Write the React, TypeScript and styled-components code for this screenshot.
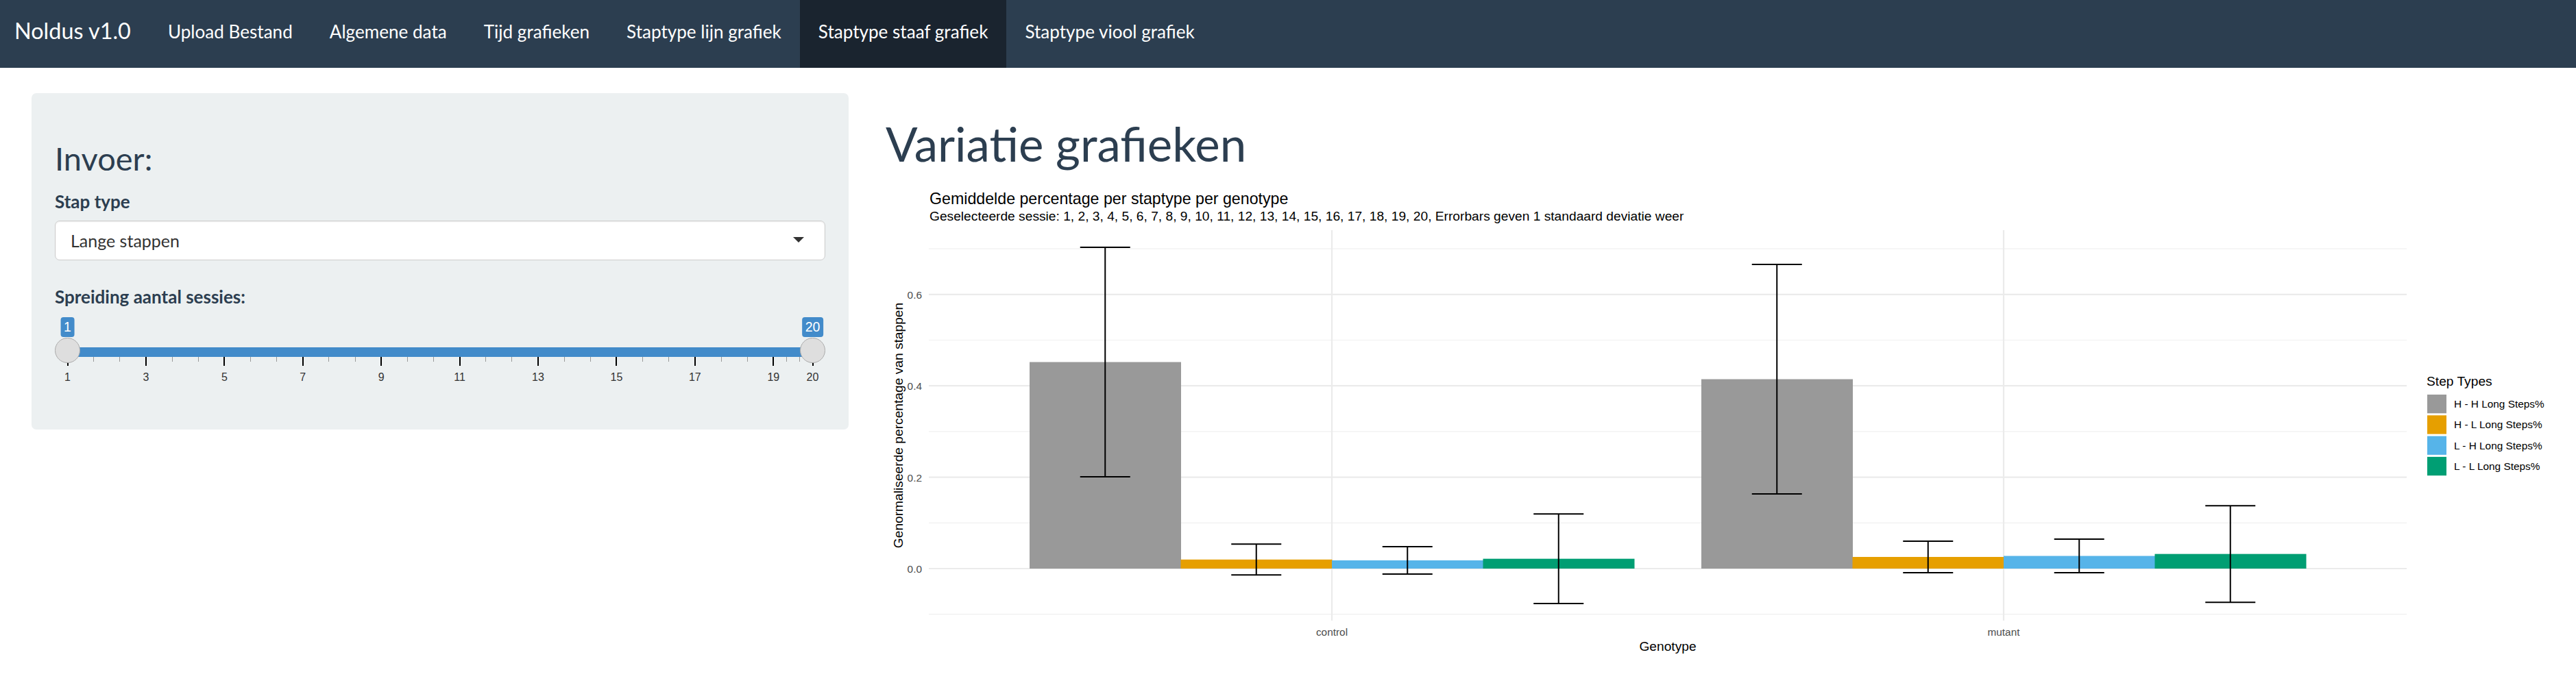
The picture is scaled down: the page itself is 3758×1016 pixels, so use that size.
import React from 'react';
import styled, { createGlobalStyle } from 'styled-components';

const GlobalStyle = createGlobalStyle`
  html, body {
    margin: 0;
    padding: 0;
    background-color: #ffffff;
  }
  body {
    font-family: Lato, 'Liberation Sans', sans-serif;
    color: #2c3e50;
  }
  * {
    box-sizing: border-box;
  }
`;

const tabs = [
  'Upload Bestand',
  'Algemene data',
  'Tijd grafieken',
  'Staptype lijn grafiek',
  'Staptype staaf grafiek',
  'Staptype viool grafiek',
];
const activeTab = 'Staptype staaf grafiek';

// ---------- slider ----------
const SLIDER_MIN = 1;
const SLIDER_MAX = 20;
const majorTicks = [1, 3, 5, 7, 9, 11, 13, 15, 17, 19, 20];
const minorTicks = majorTicks.slice(0, -1).flatMap((v, i) => {
  const next = majorTicks[i + 1];
  const step = (next - v) / 3;
  return [v + step, v + step * 2];
});
const pct = (v: number) => ((v - SLIDER_MIN) / (SLIDER_MAX - SLIDER_MIN)) * 100;

const RangeSlider = ({ from, to }: { from: number; to: number }) => (
  <SliderWrap>
    <Rail>
      <Bar style={{ left: `${pct(from)}%`, right: `${100 - pct(to)}%` }} />
      {minorTicks.map((v) => (
        <Tick key={`m${v}`} style={{ left: `${pct(v)}%` }} />
      ))}
      {majorTicks.map((v) => (
        <Tick key={`M${v}`} $major style={{ left: `${pct(v)}%` }} />
      ))}
      {majorTicks.map((v) => (
        <GridLabel key={`l${v}`} style={{ left: `${pct(v)}%` }}>
          {v}
        </GridLabel>
      ))}
      {[from, to].map((v) => (
        <React.Fragment key={`h${v}`}>
          <ValueTag style={{ left: `${pct(v)}%` }}>{v}</ValueTag>
          <Handle style={{ left: `${pct(v)}%` }} />
        </React.Fragment>
      ))}
    </Rail>
  </SliderWrap>
);

// ---------- chart ----------
const CHART_W = 2420;
const CHART_H = 720;
const PANEL = { left: 63, right: 2219, top: 70, bottom: 640 };
const Y_ZERO = 564;
const Y_SCALE = 667;
const yPos = (v: number) => Y_ZERO - v * Y_SCALE;
const BAR_W = 220.5;
const CAP_W = 73;

const stepTypes = [
  { label: 'H - H Long Steps%', color: '#999999' },
  { label: 'H - L Long Steps%', color: '#E69F00' },
  { label: 'L - H Long Steps%', color: '#56B4E9' },
  { label: 'L - L Long Steps%', color: '#009E73' },
];

const groups = [
  {
    name: 'control',
    x: 651,
    data: [
      { mean: 0.452, sd: 0.251 },
      { mean: 0.0198, sd: 0.0338 },
      { mean: 0.018, sd: 0.03 },
      { mean: 0.0215, sd: 0.098 },
    ],
  },
  {
    name: 'mutant',
    x: 1631,
    data: [
      { mean: 0.4145, sd: 0.2511 },
      { mean: 0.0255, sd: 0.0345 },
      { mean: 0.0277, sd: 0.0367 },
      { mean: 0.032, sd: 0.1057 },
    ],
  },
];

const majorY = [0, 0.2, 0.4, 0.6];
const minorY = [-0.1, 0.1, 0.3, 0.5, 0.7];

const BarChart = () => (
  <ChartSvg width={CHART_W} height={CHART_H} viewBox={`0 0 ${CHART_W} ${CHART_H}`}>
    <rect x={0} y={0} width={CHART_W} height={CHART_H} fill="#ffffff" />
    <text x={64} y={32} fontSize={23.2} fill="#000000">
      Gemiddelde percentage per staptype per genotype
    </text>
    <text x={64} y={56} fontSize={19.2} fill="#000000">
      Geselecteerde sessie: 1, 2, 3, 4, 5, 6, 7, 8, 9, 10, 11, 12, 13, 14, 15, 16, 17, 18, 19, 20, Errorbars geven 1
      standaard deviatie weer
    </text>

    {minorY.map((v) => (
      <line key={`mn${v}`} x1={PANEL.left} x2={PANEL.right} y1={yPos(v)} y2={yPos(v)} stroke="#f0f0f0" strokeWidth={1.2} />
    ))}
    {majorY.map((v) => (
      <line key={`mj${v}`} x1={PANEL.left} x2={PANEL.right} y1={yPos(v)} y2={yPos(v)} stroke="#ebebeb" strokeWidth={2.2} />
    ))}
    {groups.map((g) => (
      <line key={`vx${g.name}`} x1={g.x} x2={g.x} y1={PANEL.top} y2={PANEL.bottom} stroke="#ebebeb" strokeWidth={2.2} />
    ))}

    {majorY.map((v) => (
      <text key={`yl${v}`} x={53} y={yPos(v) + 6} fontSize={15.4} fill="#4d4d4d" textAnchor="end">
        {v.toFixed(1)}
      </text>
    ))}

    {groups.map((g) =>
      g.data.map((d, i) => {
        const x = g.x - BAR_W * 2 + i * BAR_W;
        return (
          <rect
            key={`b${g.name}${i}`}
            x={x}
            y={yPos(d.mean)}
            width={BAR_W + 0.5}
            height={Y_ZERO - yPos(d.mean)}
            fill={stepTypes[i].color}
          />
        );
      })
    )}

    {groups.map((g) =>
      g.data.map((d, i) => {
        const cx = g.x - BAR_W * 1.5 + i * BAR_W;
        const top = yPos(d.mean + d.sd);
        const bottom = yPos(d.mean - d.sd);
        return (
          <g key={`e${g.name}${i}`} stroke="#000000" strokeWidth={2}>
            <line x1={cx} x2={cx} y1={top} y2={bottom} />
            <line x1={cx - CAP_W / 2} x2={cx + CAP_W / 2} y1={top} y2={top} />
            <line x1={cx - CAP_W / 2} x2={cx + CAP_W / 2} y1={bottom} y2={bottom} />
          </g>
        );
      })
    )}

    {groups.map((g) => (
      <text key={`xl${g.name}`} x={g.x} y={662} fontSize={15.4} fill="#4d4d4d" textAnchor="middle">
        {g.name}
      </text>
    ))}
    <text x={(PANEL.left + PANEL.right) / 2} y={684} fontSize={19.2} fill="#000000" textAnchor="middle">
      Genotype
    </text>
    <text
      x={18}
      y={355}
      fontSize={19.2}
      fill="#000000"
      textAnchor="middle"
      dominantBaseline="central"
      transform="rotate(-90 18 355)"
    >
      Genormaliseerde percentage van stappen
    </text>

    <text x={2248} y={297} fontSize={19.2} fill="#000000">
      Step Types
    </text>
    {stepTypes.map((s, i) => (
      <g key={s.label}>
        <rect x={2249} y={310 + i * 30.3} width={28} height={27.3} fill={s.color} />
        <text x={2288} y={310 + i * 30.3 + 19} fontSize={15.4} fill="#000000">
          {s.label}
        </text>
      </g>
    ))}
  </ChartSvg>
);

const App = () => (
  <>
    <GlobalStyle />
    <Navbar>
      <Brand>Noldus v1.0</Brand>
      {tabs.map((t) => (
        <NavLink key={t} $active={t === activeTab}>
          {t}
        </NavLink>
      ))}
    </Navbar>
    <Page>
      <SideCol>
        <Well>
          <SideTitle>Invoer:</SideTitle>
          <FormGroup $gap={35}>
            <Label>Stap type</Label>
            <SelectBox>
              <span>Lange stappen</span>
              <Caret />
            </SelectBox>
          </FormGroup>
          <FormGroup $gap={29}>
            <Label>Spreiding aantal sessies:</Label>
            <RangeSlider from={1} to={20} />
          </FormGroup>
        </Well>
      </SideCol>
      <MainCol>
        <PageTitle>Variatie grafieken</PageTitle>
        <BarChart />
      </MainCol>
    </Page>
  </>
);

export default App;

const Navbar = styled.nav`
  display: flex;
  height: 99px;
  background-color: #2c3e50;
`;
const Brand = styled.a`
  height: 99px;
  padding: 24.5px 27px 0 21px;
  font-size: 32.4px;
  line-height: 40px;
  color: #ffffff;
  white-space: nowrap;
`;
const NavLink = styled.a<{ $active?: boolean }>`
  height: 99px;
  padding: 27px 27px 0;
  font-size: 26.1px;
  line-height: 38px;
  color: #ffffff;
  white-space: nowrap;
  background-color: ${(p) => (p.$active ? '#1a242f' : 'transparent')};
`;
const Page = styled.div`
  display: flex;
  align-items: flex-start;
  padding: 37px 19px 0;
`;
const SideCol = styled.div`
  flex: none;
  width: 1246px;
  padding: 0 27px;
`;
const MainCol = styled.div`
  flex: 1;
  min-width: 0;
  padding: 0 27px;
`;
const Well = styled.div`
  padding: 34px;
  background-color: #ecf0f1;
  border-radius: 7px;
`;
const SideTitle = styled.h3`
  margin: 36px 0 18px;
  font-size: 47px;
  font-weight: 400;
  line-height: 1.1;
  color: #2c3e50;
`;
const FormGroup = styled.div<{ $gap: number }>`
  margin-bottom: ${(p) => p.$gap}px;
`;
const Label = styled.label`
  display: block;
  margin-bottom: 9px;
  font-size: 26px;
  font-weight: 700;
  line-height: 37px;
  color: #2c3e50;
`;
const SelectBox = styled.div`
  display: flex;
  align-items: center;
  justify-content: space-between;
  height: 58px;
  padding: 0 30px 0 22px;
  background-color: #ffffff;
  border: 1px solid #cdcdcd;
  border-radius: 7px;
  box-shadow: inset 0 1px 2px rgba(0, 0, 0, 0.08);
  font-size: 25px;
  color: #333333;
`;
const Caret = styled.span`
  width: 0;
  height: 0;
  margin-top: -2px;
  border-left: 8px solid transparent;
  border-right: 8px solid transparent;
  border-top: 8px solid #333333;
`;
const SliderWrap = styled.div`
  position: relative;
  height: 103px;
  font-family: 'Liberation Sans', Arial, sans-serif;
`;
const Rail = styled.div`
  position: absolute;
  top: 0;
  bottom: 0;
  left: 18.5px;
  right: 18.5px;
`;
const Bar = styled.div`
  position: absolute;
  top: 46px;
  height: 14px;
  background-color: #428bca;
`;
const Tick = styled.div<{ $major?: boolean }>`
  position: absolute;
  top: 60px;
  width: ${(p) => (p.$major ? 2 : 1)}px;
  height: ${(p) => (p.$major ? 13 : 7)}px;
  margin-left: ${(p) => (p.$major ? -1 : -0.5)}px;
  background-color: ${(p) => (p.$major ? '#000000' : '#999999')};
`;
const GridLabel = styled.span`
  position: absolute;
  top: 81px;
  transform: translateX(-50%);
  font-size: 16px;
  line-height: 18px;
  color: #333333;
`;
const ValueTag = styled.span`
  position: absolute;
  top: 2px;
  height: 29px;
  padding: 0 5px;
  transform: translateX(-50%);
  font-size: 19.5px;
  line-height: 29px;
  color: #ffffff;
  background-color: #428bca;
  border-radius: 4px;
`;
const Handle = styled.span`
  position: absolute;
  top: 32px;
  width: 37px;
  height: 37px;
  margin-left: -18.5px;
  background-color: #dedede;
  border: 1px solid #ababab;
  border-radius: 50%;
`;
const PageTitle = styled.h1`
  margin: 36px 0 18px;
  font-size: 69px;
  font-weight: 400;
  line-height: 1.1;
  color: #2c3e50;
`;
const ChartSvg = styled.svg`
  display: block;
  font-family: 'Liberation Sans', Arial, sans-serif;
`;
